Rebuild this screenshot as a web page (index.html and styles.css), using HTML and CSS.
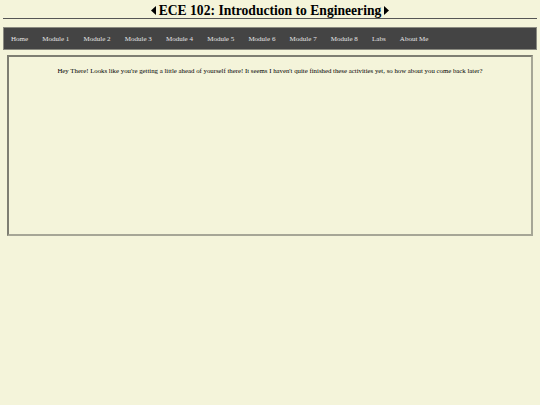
FILE: index.html
```html
<!DOCTYPE html>
<html>
<head>
<meta charset="utf-8">
<link rel="stylesheet" href="styles.css">
</head>
<body>
<h1 class="title">
  <svg class="arrow" width="5" height="9" viewBox="0 0 5 9"><polygon points="5,0 0,4.5 5,9" fill="#000"/></svg>
  <span>ECE 102: Introduction to Engineering</span>
  <svg class="arrow" width="5" height="9" viewBox="0 0 5 9"><polygon points="0,0 5,4.5 0,9" fill="#000"/></svg>
</h1>
<nav class="nav">
  <a class="nav-item">Home</a>
  <a class="nav-item">Module 1</a>
  <a class="nav-item">Module 2</a>
  <a class="nav-item">Module 3</a>
  <a class="nav-item">Module 4</a>
  <a class="nav-item">Module 5</a>
  <a class="nav-item">Module 6</a>
  <a class="nav-item">Module 7</a>
  <a class="nav-item">Module 8</a>
  <a class="nav-item">Labs</a>
  <a class="nav-item">About Me</a>
</nav>
<main class="content">
  <p class="message">Hey There! Looks like you're getting a little ahead of yourself there! It seems I haven't quite finished these activities yet, so how about you come back later?</p>
</main>
</body>
</html>
```
FILE: styles.css
```css
html, body {
  margin: 0;
  background: #f4f4da;
}
body {
  padding: 0 3px;
  font-family: "Liberation Serif", "Times New Roman", serif;
  color: #000;
}
.title {
  margin: 0;
  height: 19px;
  box-sizing: border-box;
  padding-top: 3px;
  border-bottom: 1px solid #555;
  font-size: 13.6px;
  line-height: 14px;
  font-weight: bold;
  text-align: center;
  display: flex;
  justify-content: center;
  align-items: center;
  gap: 3px;
}
.arrow {
  display: block;
}
.nav {
  margin-top: 8px;
  height: 23px;
  box-sizing: border-box;
  background: #444;
  border: 1px solid #8a8a80;
  display: flex;
  align-items: center;
  gap: 14.2px;
  padding-left: 7px;
}
.nav-item {
  color: #e6e6e6;
  font-size: 7px;
  line-height: 8px;
}
.content {
  margin: 5px 4px 0;
  height: 181px;
  box-sizing: border-box;
  border-style: solid;
  border-width: 2px;
  border-color: #7e7e72 #a6a696 #a6a696 #7e7e72;
}
.message {
  margin: 10px 0 0;
  text-align: center;
  font-size: 6.8px;
  line-height: 8px;
}
```
